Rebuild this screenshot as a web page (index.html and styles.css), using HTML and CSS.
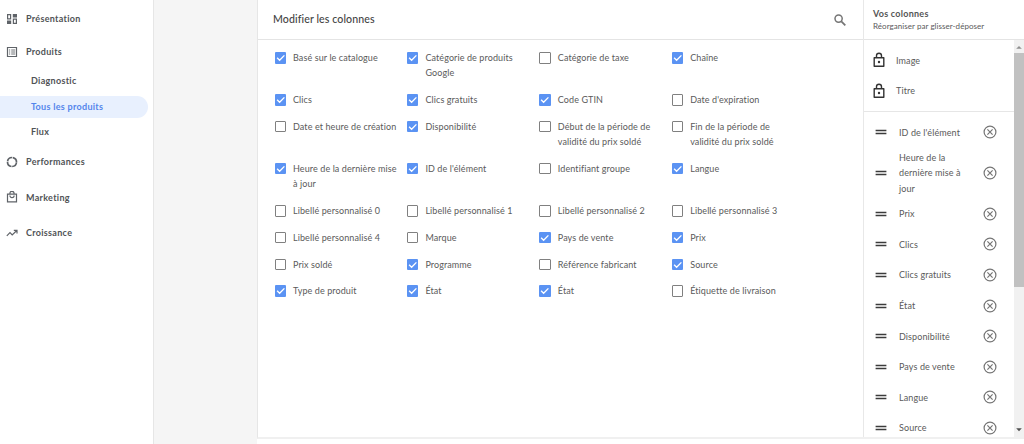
FILE: index.html
```html
<!DOCTYPE html>
<html lang="fr">

<head>
    <meta charset="UTF-8">
    <meta name="viewport" content="width=device-width, initial-scale=1.0">
    <title>Modifier les colonnes</title>
    <link rel="stylesheet" href="styles.css">
</head>

<body>
    <svg class="sprite" width="0" height="0">
        <symbol id="i-lock" viewBox="0 0 12 16">
            <path d="M1.2 5.8h9.6v8.4H1.2zM3.5 5.8V3.8a2.5 2.5 0 0 1 5 0v2" fill="none" stroke="#333" stroke-width="1.4" stroke-linejoin="round"/>
            <circle cx="6" cy="10" r="1.2" fill="#333"/>
        </symbol>
        <symbol id="i-drag" viewBox="0 0 12 6">
            <path d="M.6 1.4h10.8M.6 4.5h10.8" stroke="#3c3c3c" stroke-width="1.5"/>
        </symbol>
        <symbol id="i-remove" viewBox="0 0 14 14">
            <circle cx="7" cy="7" r="5.9" fill="none" stroke="#757575" stroke-width="1.2"/>
            <path d="M4.4 4.4l5.2 5.2M9.6 4.4L4.4 9.6" stroke="#757575" stroke-width="1.2"/>
        </symbol>
        <symbol id="i-check" viewBox="0 0 12 12">
            <path d="M2.2 6.1l2.6 2.6 5-5.2" fill="none" stroke="#fff" stroke-width="1.4"/>
        </symbol>
    </svg>

    <div class="app">
        <nav class="sidebar">
            <a class="nav-item presentation">
                <svg class="nav-icon" viewBox="0 0 12 12" fill="none" stroke="#5f6368" stroke-width="1.2"><path d="M1.6 1.6h3v4.2h-3zM7.4 6.2h3v4.2h-3z"/><path d="M6.8 1h4.2v3.6H6.8zM1 7.6h4.2V11H1z" fill="#5f6368" stroke="none"/></svg>
                Présentation
            </a>
            <a class="nav-item produits">
                <svg class="nav-icon" viewBox="0 0 12 12" fill="none" stroke="#5f6368"><path d="M1.5 1.5h9v9h-9z" stroke-width="1.2"/><path d="M3 4h1.2M3 6h1.2M3 8h1.2M5.2 4h4M5.2 6h4M5.2 8h4" stroke-width=".9"/></svg>
                Produits
            </a>
            <a class="sub-item">Diagnostic</a>
            <a class="sub-item active">Tous les produits</a>
            <a class="sub-item">Flux</a>
            <a class="nav-item performances">
                <svg class="nav-icon" viewBox="0 0 12 12" fill="none" stroke="#5f6368"><circle cx="6" cy="6" r="4.5" stroke-width="1.7" stroke-dasharray="6.4 .67" stroke-dashoffset="-.33"/></svg>
                Performances
            </a>
            <a class="nav-item marketing">
                <svg class="nav-icon" viewBox="0 0 12 12" fill="none" stroke="#5f6368" stroke-width="1.2"><path d="M1.5 3.2h9v7.6h-9zM3.9 3.2V2.4a2.1 2.1 0 0 1 4.2 0v.8M3.9 4.6a2.1 2.1 0 0 0 4.2 0"/></svg>
                Marketing
            </a>
            <a class="nav-item croissance">
                <svg class="nav-icon" viewBox="0 0 12 12" fill="none" stroke="#5f6368" stroke-width="1.2"><path d="M.8 8.9l3.2-3.2 2.2 2.2 4.6-4.4M7.8 3.3h3.2v3.2"/></svg>
                Croissance
            </a>
        </nav>

        <div class="dialog">
            <main class="editor">
                <header class="editor-header">
                    <h1>Modifier les colonnes</h1>
                    <svg class="search" viewBox="0 0 12 12" fill="none" stroke="#757575"><circle cx="4.6" cy="4.6" r="3.6" stroke-width="1.5"/><path d="M7.3 7.3l4 4" stroke-width="1.8"/></svg>
                </header>
                <div class="options">
                    <label class="option"><span class="box checked"><svg><use href="#i-check"/></svg></span><span>Basé sur le catalogue</span></label>
                    <label class="option"><span class="box checked"><svg><use href="#i-check"/></svg></span><span>Catégorie de produits<br>Google</span></label>
                    <label class="option"><span class="box"></span><span>Catégorie de taxe</span></label>
                    <label class="option"><span class="box checked"><svg><use href="#i-check"/></svg></span><span>Chaîne</span></label>

                    <label class="option"><span class="box checked"><svg><use href="#i-check"/></svg></span><span>Clics</span></label>
                    <label class="option"><span class="box checked"><svg><use href="#i-check"/></svg></span><span>Clics gratuits</span></label>
                    <label class="option"><span class="box checked"><svg><use href="#i-check"/></svg></span><span>Code GTIN</span></label>
                    <label class="option"><span class="box"></span><span>Date d'expiration</span></label>

                    <label class="option"><span class="box"></span><span>Date et heure de création</span></label>
                    <label class="option"><span class="box checked"><svg><use href="#i-check"/></svg></span><span>Disponibilité</span></label>
                    <label class="option"><span class="box"></span><span>Début de la période de<br>validité du prix soldé</span></label>
                    <label class="option"><span class="box"></span><span>Fin de la période de<br>validité du prix soldé</span></label>

                    <label class="option"><span class="box checked"><svg><use href="#i-check"/></svg></span><span>Heure de la dernière mise<br>à jour</span></label>
                    <label class="option"><span class="box checked"><svg><use href="#i-check"/></svg></span><span>ID de l'élément</span></label>
                    <label class="option"><span class="box"></span><span>Identifiant groupe</span></label>
                    <label class="option"><span class="box checked"><svg><use href="#i-check"/></svg></span><span>Langue</span></label>

                    <label class="option"><span class="box"></span><span>Libellé personnalisé 0</span></label>
                    <label class="option"><span class="box"></span><span>Libellé personnalisé 1</span></label>
                    <label class="option"><span class="box"></span><span>Libellé personnalisé 2</span></label>
                    <label class="option"><span class="box"></span><span>Libellé personnalisé 3</span></label>

                    <label class="option"><span class="box"></span><span>Libellé personnalisé 4</span></label>
                    <label class="option"><span class="box"></span><span>Marque</span></label>
                    <label class="option"><span class="box checked"><svg><use href="#i-check"/></svg></span><span>Pays de vente</span></label>
                    <label class="option"><span class="box checked"><svg><use href="#i-check"/></svg></span><span>Prix</span></label>

                    <label class="option"><span class="box"></span><span>Prix soldé</span></label>
                    <label class="option"><span class="box checked"><svg><use href="#i-check"/></svg></span><span>Programme</span></label>
                    <label class="option"><span class="box"></span><span>Référence fabricant</span></label>
                    <label class="option"><span class="box checked"><svg><use href="#i-check"/></svg></span><span>Source</span></label>

                    <label class="option"><span class="box checked"><svg><use href="#i-check"/></svg></span><span>Type de produit</span></label>
                    <label class="option"><span class="box checked"><svg><use href="#i-check"/></svg></span><span>État</span></label>
                    <label class="option"><span class="box checked"><svg><use href="#i-check"/></svg></span><span>État</span></label>
                    <label class="option"><span class="box"></span><span>Étiquette de livraison</span></label>
                </div>
            </main>

            <aside class="columns">
                <header class="columns-header">
                    <h2>Vos colonnes</h2>
                    <p>Réorganiser par glisser-déposer</p>
                </header>
                <div class="columns-body">
                    <div class="lists">
                        <ul class="locked">
                            <li><svg class="lock"><use href="#i-lock"/></svg>Image</li>
                            <li><svg class="lock"><use href="#i-lock"/></svg>Titre</li>
                        </ul>
                        <ul class="sortable">
                            <li><svg class="drag"><use href="#i-drag"/></svg><span class="name">ID de l'élément</span><svg class="remove"><use href="#i-remove"/></svg></li>
                            <li><svg class="drag"><use href="#i-drag"/></svg><span class="name">Heure de la<br>dernière mise à<br>jour</span><svg class="remove"><use href="#i-remove"/></svg></li>
                            <li><svg class="drag"><use href="#i-drag"/></svg><span class="name">Prix</span><svg class="remove"><use href="#i-remove"/></svg></li>
                            <li><svg class="drag"><use href="#i-drag"/></svg><span class="name">Clics</span><svg class="remove"><use href="#i-remove"/></svg></li>
                            <li><svg class="drag"><use href="#i-drag"/></svg><span class="name">Clics gratuits</span><svg class="remove"><use href="#i-remove"/></svg></li>
                            <li><svg class="drag"><use href="#i-drag"/></svg><span class="name">État</span><svg class="remove"><use href="#i-remove"/></svg></li>
                            <li><svg class="drag"><use href="#i-drag"/></svg><span class="name">Disponibilité</span><svg class="remove"><use href="#i-remove"/></svg></li>
                            <li><svg class="drag"><use href="#i-drag"/></svg><span class="name">Pays de vente</span><svg class="remove"><use href="#i-remove"/></svg></li>
                            <li><svg class="drag"><use href="#i-drag"/></svg><span class="name">Langue</span><svg class="remove"><use href="#i-remove"/></svg></li>
                            <li><svg class="drag"><use href="#i-drag"/></svg><span class="name">Source</span><svg class="remove"><use href="#i-remove"/></svg></li>
                        </ul>
                    </div>
                    <div class="scrollbar">
                        <svg class="arrow" viewBox="0 0 10 13"><path d="M2.2 8.8L5 6l2.8 2.8z" fill="#8f8f8f"/></svg>
                        <div class="thumb"></div>
                        <svg class="arrow" viewBox="0 0 10 13"><path d="M2.2 4.2L5 7.2l2.8-3z" fill="#505050"/></svg>
                    </div>
                </div>
            </aside>
        </div>
    </div>
</body>

</html>
```
FILE: styles.css
```css
* {
    box-sizing: border-box;
}

body {
    margin: 0;
    font-family: Lato, "Open Sans", sans-serif;
    font-size: 9px;
    line-height: 15.3px;
    letter-spacing: 0.1px;
    color: #5a5a5a;
    background: #fff;
    overflow: hidden;
}

h1, h2, p, ul {
    margin: 0;
    padding: 0;
}

ul {
    list-style: none;
}

svg {
    display: block;
    flex: none;
}

.sprite {
    display: none;
}

.app {
    display: flex;
    height: 444px;
    background: #f5f5f5;
}

/* left navigation */
.sidebar {
    width: 154px;
    flex: none;
    background: #fff;
    border-right: 1px solid #e6e6e6;
    font-weight: 700;
    letter-spacing: 0.3px;
    color: #505356;
}

.nav-item {
    display: flex;
    align-items: center;
    gap: 8px;
    height: 22px;
    padding-left: 6px;
}

.nav-icon {
    width: 12px;
    height: 12px;
}

.presentation {
    margin-top: 8px;
}

.produits {
    margin: 11px 0 7px;
}

.sub-item {
    display: flex;
    align-items: center;
    width: 148px;
    height: 22px;
    margin-bottom: 3.5px;
    padding-left: 31px;
}

.sub-item.active {
    background: #e8f0fe;
    border-radius: 0 11px 11px 0;
    color: #5385ec;
}

.performances {
    margin-top: 8px;
}

.marketing, .croissance {
    margin-top: 13.3px;
}

/* column editor */
.dialog {
    display: flex;
    flex: 1;
    height: 439px;
    margin-left: 103px;
    background: #fff;
    border-left: 1px solid #e6e6e6;
    border-bottom: 2px solid #f0f0f0;
    box-shadow: 0 5px #fff;
}

.editor {
    flex: 1;
}

.editor-header {
    display: flex;
    align-items: center;
    justify-content: space-between;
    height: 40px;
    padding: 0 17px 0 15px;
    border-bottom: 1px solid #e4e4e4;
}

.editor-header h1 {
    font-size: 10.6px;
    font-weight: 500;
    color: #444;
}

.search {
    width: 12px;
    height: 12px;
}

.options {
    display: grid;
    grid-template-columns: repeat(4, 132.4px);
    row-gap: 11.5px;
    padding: 10px 0 0 16.5px;
}

.option {
    display: flex;
    align-items: flex-start;
    gap: 7px;
    white-space: nowrap;
}

.box {
    width: 11.5px;
    height: 11.5px;
    margin-top: 2px;
    border: 1px solid #808080;
    border-radius: 1px;
}

.box.checked {
    border: none;
    background: #5b93f3;
}

.box svg {
    width: 100%;
    height: 100%;
}

/* selected columns */
.columns {
    width: 161px;
    border-left: 1px solid #e8e8e8;
}

.columns-header {
    height: 40px;
    padding: 8px 0 0 9px;
    border-bottom: 1px solid #e4e4e4;
    line-height: 12px;
    white-space: nowrap;
}

.columns-header h2 {
    font-size: 9px;
    line-height: 12px;
    font-weight: 700;
    letter-spacing: 0.25px;
    color: #555;
}

.columns-header p {
    font-size: 8px;
    letter-spacing: 0.05px;
}

.columns-body {
    display: flex;
    height: 397px;
    overflow: hidden;
}

.lists {
    flex: 1;
}

.locked {
    padding: 5px 0;
    border-bottom: 1px solid #e6e6e6;
}

.locked li {
    display: flex;
    align-items: center;
    gap: 11px;
    height: 30.5px;
    padding-left: 9px;
}

.lock {
    width: 12px;
    height: 16px;
}

.sortable {
    padding-top: 5px;
}

.sortable li {
    display: flex;
    align-items: center;
    min-height: 30.6px;
    padding: 2.5px 17px 2.5px 11px;
    white-space: nowrap;
}

.drag {
    width: 12px;
    height: 6px;
}

.name {
    flex: 1;
    padding-left: 12px;
}

.remove {
    width: 14px;
    height: 14px;
}

.scrollbar {
    display: flex;
    flex-direction: column;
    width: 10px;
    background: #f1f1f1;
}

.arrow {
    width: 10px;
    height: 13px;
}

.thumb {
    height: 234px;
    margin-bottom: auto;
    background: #c1c1c1;
}
```
